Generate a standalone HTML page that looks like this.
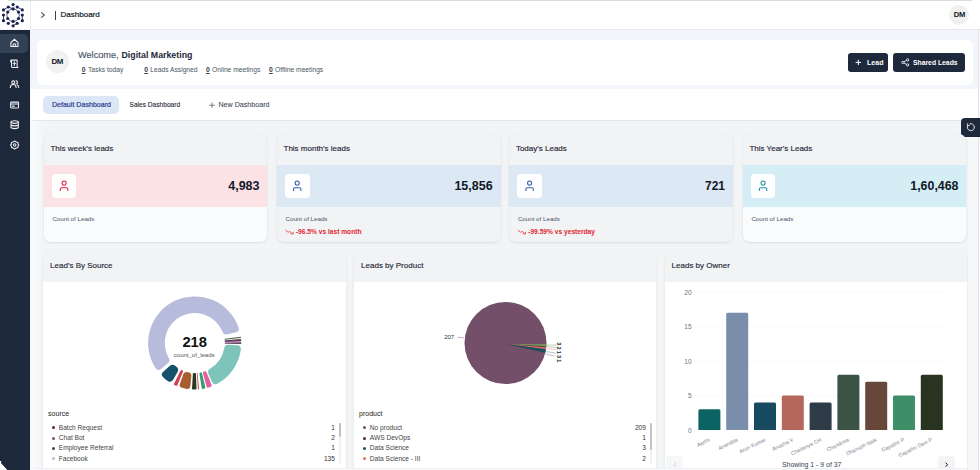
<!DOCTYPE html>
<html><head><meta charset="utf-8">
<style>
*{margin:0;padding:0;box-sizing:border-box}
html,body{width:980px;height:470px;overflow:hidden}
body{background:#f3f4f6;font-family:"Liberation Sans",sans-serif;position:relative}
.a{position:absolute}
.t{position:absolute;white-space:nowrap;line-height:1}
svg{position:absolute;left:0;top:0}
</style></head><body>
<div class="a" style="left:30.00px;top:121.00px;width:950.00px;height:349.00px;background:#f3f4f6;"></div>
<div class="a" style="left:0.00px;top:0.00px;width:980.00px;height:1.00px;background:#fff;"></div>
<div class="a" style="left:8.00px;top:0.00px;width:964.00px;height:1.00px;background:#d4dedc;"></div>
<div class="a" style="left:0.00px;top:1.00px;width:980.00px;height:28.00px;background:#fff;"></div>
<div class="a" style="left:30.00px;top:29.00px;width:950.00px;height:1.00px;background:#e4e7eb;"></div>
<div class="a" style="left:30.00px;top:1.00px;width:1.00px;height:29.00px;background:#e9ecef;"></div>
<div class="t" style="left:60.60px;top:11.00px;font-size:8.00px;color:#111827;-webkit-text-stroke:0.2px #111827;">Dashboard</div>
<div class="a" style="left:54.80px;top:11.00px;width:1.20px;height:8.60px;background:#374151;"></div>
<svg width="980" height="30"><path d="M41.6 12.6 L44.3 15 L41.6 17.4" fill="none" stroke="#4b5563" stroke-width="1.1" stroke-linecap="round" stroke-linejoin="round"/></svg>
<div class="a" style="left:949.00px;top:5.20px;width:19.80px;height:19.80px;background:#f0f0f1;border-radius:50%;"></div>
<div class="t" style="left:953.80px;top:11.00px;font-size:7.60px;color:#111827;font-weight:bold;letter-spacing:-0.4px;">DM</div>
<div class="a" style="left:0.00px;top:30.00px;width:30.00px;height:440.00px;background:#1e293b;"></div>
<div class="a" style="left:0.00px;top:34.00px;width:28.00px;height:18.70px;background:#334155;border-radius:0 5px 5px 0;"></div>
<svg width="30" height="470"><path d="M0 461 H1.1 V463.3 L7.3 470 H0 Z" fill="#fff"/></svg>
<div class="a" style="left:31.00px;top:30.00px;width:949.00px;height:59.00px;background:#f2f5f9;"></div>
<div class="a" style="left:36.60px;top:40.00px;width:936.40px;height:45.00px;background:#fff;border-radius:6px;"></div>
<div class="a" style="left:45.50px;top:49.90px;width:23.40px;height:23.40px;background:#f1f1f2;border-radius:50%;"></div>
<div class="t" style="left:51.50px;top:58.00px;font-size:7.90px;color:#111827;font-weight:bold;letter-spacing:-0.5px;">DM</div>
<div class="t" style="left:78.00px;top:51.00px;font-size:9.20px;color:#4a5568;-webkit-text-stroke:0.15px #4a5568;">Welcome,</div>
<div class="t" style="left:121.50px;top:51.00px;font-size:8.80px;color:#1e293b;font-weight:bold;">Digital Marketing</div>
<div class="t" style="left:81.70px;top:67.00px;font-size:6.80px;color:#374151;font-weight:bold;text-decoration:underline;">0</div>
<div class="t" style="left:88.00px;top:67.00px;font-size:6.70px;color:#4b5563;">Tasks today</div>
<div class="t" style="left:144.30px;top:67.00px;font-size:6.80px;color:#374151;font-weight:bold;text-decoration:underline;">0</div>
<div class="t" style="left:150.30px;top:67.00px;font-size:6.70px;color:#4b5563;">Leads Assigned</div>
<div class="t" style="left:206.00px;top:67.00px;font-size:6.80px;color:#374151;font-weight:bold;text-decoration:underline;">0</div>
<div class="t" style="left:212.00px;top:67.00px;font-size:6.70px;color:#4b5563;">Online meetings</div>
<div class="t" style="left:269.00px;top:67.00px;font-size:6.80px;color:#374151;font-weight:bold;text-decoration:underline;">0</div>
<div class="t" style="left:275.00px;top:67.00px;font-size:6.70px;color:#4b5563;">Offline meetings</div>
<div class="a" style="left:848.30px;top:53.30px;width:40.00px;height:18.30px;background:#1e293b;border-radius:3px;"></div>
<div class="a" style="left:892.90px;top:53.30px;width:72.10px;height:18.30px;background:#1e293b;border-radius:3px;"></div>
<div class="t" style="left:867.00px;top:59.00px;font-size:7.05px;color:#fff;font-weight:bold;">Lead</div>
<div class="t" style="left:913.00px;top:60.00px;font-size:6.80px;color:#fff;font-weight:bold;">Shared Leads</div>
<svg width="980" height="80"><path d="M858.3 59.7V65.1M855.6 62.4H861" stroke="#fff" stroke-width="1"/><g fill="none" stroke="#fff" stroke-width="0.85"><circle cx="902.8" cy="62.4" r="1.15"/><circle cx="907.6" cy="59.9" r="1.15"/><circle cx="907.6" cy="64.9" r="1.15"/><path d="M903.9 61.8L906.5 60.5M903.9 63L906.5 64.3"/></g></svg>
<div class="a" style="left:31.00px;top:89.00px;width:949.00px;height:32.00px;background:#fff;"></div>
<div class="a" style="left:31.00px;top:120.00px;width:949.00px;height:1.00px;background:#e5e7eb;"></div>
<div class="a" style="left:43.10px;top:96.20px;width:75.80px;height:17.60px;background:#dbe7f6;border-radius:5px;"></div>
<div class="t" style="left:51.90px;top:102.00px;font-size:7.10px;color:#2b3f8f;-webkit-text-stroke:0.2px #2b3f8f;">Default Dashboard</div>
<div class="t" style="left:129.50px;top:102.00px;font-size:6.60px;color:#1f2937;-webkit-text-stroke:0.1px #1f2937;">Sales Dashboard</div>
<div class="t" style="left:218.40px;top:102.00px;font-size:7.15px;color:#374151;-webkit-text-stroke:0.05px #374151;">New Dashboard</div>
<svg width="980" height="121"><path d="M212 102.6V107.9M209.3 105.25H214.7" stroke="#6b7280" stroke-width="0.9"/></svg>
<div class="a" style="left:967.50px;top:121.00px;width:10.50px;height:349.00px;background:#f6f7f9;"></div>
<div class="a" style="left:978.00px;top:30.00px;width:1.00px;height:440.00px;background:#e2e4e8;"></div>
<div class="a" style="left:979.00px;top:30.00px;width:1.00px;height:440.00px;background:#fbfbfc;"></div>
<div class="a" style="left:961.30px;top:117.90px;width:18.70px;height:18.70px;background:#1e293b;border-radius:4px 0 0 4px;"></div>
<svg width="980" height="140"><path d="M967.7 125.6 A3.5 3.5 0 1 0 969.6 123.9" fill="none" stroke="#e8eaee" stroke-width="1"/><path d="M967.3 123.4 L967.6 125.8 L969.9 125.2" fill="none" stroke="#e8eaee" stroke-width="0.9" stroke-linejoin="round"/></svg>
<div class="a" style="left:31px;top:121px;width:12px;height:349px;background:linear-gradient(90deg,#fafbfc,#f3f4f6)"></div>
<div class="a" style="left:43.80px;top:133.9px;width:223.7px;height:108px;border-radius:7px;overflow:hidden;background:#f2f3f5;box-shadow:0 1px 2.5px rgba(0,0,0,.09),0 0 1px rgba(0,0,0,.05)">
<div class="a" style="left:0;top:31.4px;width:224px;height:41.4px;background:#fde2e5"></div>
<div class="a" style="left:0;top:72.8px;width:224px;height:36px;background:#f9fbfd"></div>
<div class="a" style="left:8.1px;top:40px;width:24.6px;height:24.5px;background:#fff;border-radius:4px"></div>
</div>
<div class="t" style="left:50.40px;top:145.00px;font-size:8.00px;color:#1f2937;-webkit-text-stroke:0.15px #1f2937;">This week's leads</div>
<div class="t" style="right:720.50px;top:180.00px;font-size:12.50px;color:#111827;font-weight:bold;">4,983</div>
<div class="t" style="left:52.40px;top:216.00px;font-size:6.20px;color:#4a5568;">Count of Leads</div>
<svg width="980" height="240"><g fill="none" stroke="#e11d48" stroke-width="1.05"><circle cx="64.10" cy="183.1" r="2.05"/><path d="M60.40 190.9 V189.1 Q60.40 187.7 61.80 187.7 H66.40 Q67.80 187.7 67.80 189.1 V190.9"/></g></svg>
<div class="a" style="left:276.90px;top:133.9px;width:223.7px;height:108px;border-radius:7px;overflow:hidden;background:#f2f3f5;box-shadow:0 1px 2.5px rgba(0,0,0,.09),0 0 1px rgba(0,0,0,.05)">
<div class="a" style="left:0;top:31.4px;width:224px;height:41.4px;background:#dce9f5"></div>
<div class="a" style="left:0;top:72.8px;width:224px;height:36px;background:#f2f3f5"></div>
<div class="a" style="left:8.1px;top:40px;width:24.6px;height:24.5px;background:#fff;border-radius:4px"></div>
</div>
<div class="t" style="left:283.50px;top:145.00px;font-size:8.00px;color:#1f2937;-webkit-text-stroke:0.15px #1f2937;">This month's leads</div>
<div class="t" style="right:487.40px;top:180.00px;font-size:12.50px;color:#111827;font-weight:bold;">15,856</div>
<div class="t" style="left:285.50px;top:216.00px;font-size:6.20px;color:#4a5568;">Count of Leads</div>
<div class="t" style="left:295.80px;top:229.00px;font-size:6.65px;color:#e5262f;font-weight:bold;">-96.5% vs last month</div>
<svg width="980" height="240"><path d="M285.5 230.2 L288.2 232.3 L289.7 231.4 L292.4 233.8" fill="none" stroke="#ef4444" stroke-width="0.9"/><path d="M290.5 233.9 L293.1 233.9 L293.1 231.9" fill="none" stroke="#ef4444" stroke-width="0.9"/></svg>
<svg width="980" height="240"><g fill="none" stroke="#3559a8" stroke-width="1.05"><circle cx="297.20" cy="183.1" r="2.05"/><path d="M293.50 190.9 V189.1 Q293.50 187.7 294.90 187.7 H299.50 Q300.90 187.7 300.90 189.1 V190.9"/></g></svg>
<div class="a" style="left:509.30px;top:133.9px;width:223.7px;height:108px;border-radius:7px;overflow:hidden;background:#f2f3f5;box-shadow:0 1px 2.5px rgba(0,0,0,.09),0 0 1px rgba(0,0,0,.05)">
<div class="a" style="left:0;top:31.4px;width:224px;height:41.4px;background:#dce9f5"></div>
<div class="a" style="left:0;top:72.8px;width:224px;height:36px;background:#f2f3f5"></div>
<div class="a" style="left:8.1px;top:40px;width:24.6px;height:24.5px;background:#fff;border-radius:4px"></div>
</div>
<div class="t" style="left:515.90px;top:145.00px;font-size:8.00px;color:#1f2937;-webkit-text-stroke:0.15px #1f2937;">Today's Leads</div>
<div class="t" style="right:255.00px;top:180.00px;font-size:12.00px;color:#111827;font-weight:bold;">721</div>
<div class="t" style="left:517.90px;top:216.00px;font-size:6.20px;color:#4a5568;">Count of Leads</div>
<div class="t" style="left:528.20px;top:229.00px;font-size:6.65px;color:#e5262f;font-weight:bold;">-99.59% vs yesterday</div>
<svg width="980" height="240"><path d="M517.9 230.2 L520.6 232.3 L522.1 231.4 L524.8 233.8" fill="none" stroke="#ef4444" stroke-width="0.9"/><path d="M522.9 233.9 L525.5 233.9 L525.5 231.9" fill="none" stroke="#ef4444" stroke-width="0.9"/></svg>
<svg width="980" height="240"><g fill="none" stroke="#3559a8" stroke-width="1.05"><circle cx="529.60" cy="183.1" r="2.05"/><path d="M525.90 190.9 V189.1 Q525.90 187.7 527.30 187.7 H531.90 Q533.30 187.7 533.30 189.1 V190.9"/></g></svg>
<div class="a" style="left:742.80px;top:133.9px;width:223.7px;height:108px;border-radius:7px;overflow:hidden;background:#f2f3f5;box-shadow:0 1px 2.5px rgba(0,0,0,.09),0 0 1px rgba(0,0,0,.05)">
<div class="a" style="left:0;top:31.4px;width:224px;height:41.4px;background:#d5eef5"></div>
<div class="a" style="left:0;top:72.8px;width:224px;height:36px;background:#f9fbfd"></div>
<div class="a" style="left:8.1px;top:40px;width:24.6px;height:24.5px;background:#fff;border-radius:4px"></div>
</div>
<div class="t" style="left:749.40px;top:145.00px;font-size:8.00px;color:#1f2937;-webkit-text-stroke:0.15px #1f2937;">This Year's Leads</div>
<div class="t" style="right:21.50px;top:180.00px;font-size:12.40px;color:#111827;font-weight:bold;">1,60,468</div>
<div class="t" style="left:751.40px;top:216.00px;font-size:6.20px;color:#4a5568;">Count of Leads</div>
<svg width="980" height="240"><g fill="none" stroke="#1f8fa8" stroke-width="1.05"><circle cx="763.10" cy="183.1" r="2.05"/><path d="M759.40 190.9 V189.1 Q759.40 187.7 760.80 187.7 H765.40 Q766.80 187.7 766.80 189.1 V190.9"/></g></svg>
<div class="a" style="left:43.20px;top:250px;width:302.90px;height:226px;border-radius:7px;overflow:hidden;background:#fff;box-shadow:0 1px 2.5px rgba(0,0,0,.08),0 0 1px rgba(0,0,0,.05)">
<div class="a" style="left:0;top:0;width:100%;height:31.5px;background:#f2f3f5"></div></div>
<div class="t" style="left:50.10px;top:262.00px;font-size:8.00px;color:#1f2937;-webkit-text-stroke:0.15px #1f2937;">Lead's By Source</div>
<div class="a" style="left:354.20px;top:250px;width:301.90px;height:226px;border-radius:7px;overflow:hidden;background:#fff;box-shadow:0 1px 2.5px rgba(0,0,0,.08),0 0 1px rgba(0,0,0,.05)">
<div class="a" style="left:0;top:0;width:100%;height:31.5px;background:#f2f3f5"></div></div>
<div class="t" style="left:361.10px;top:262.00px;font-size:8.00px;color:#1f2937;-webkit-text-stroke:0.15px #1f2937;">Leads by Product</div>
<div class="a" style="left:664.70px;top:250px;width:302.00px;height:226px;border-radius:7px;overflow:hidden;background:#fff;box-shadow:0 1px 2.5px rgba(0,0,0,.08),0 0 1px rgba(0,0,0,.05)">
<div class="a" style="left:0;top:0;width:100%;height:31.5px;background:#f2f3f5"></div></div>
<div class="t" style="left:671.60px;top:262.00px;font-size:8.00px;color:#1f2937;-webkit-text-stroke:0.15px #1f2937;">Leads by Owner</div>
<svg width="980" height="470" font-family="Liberation Sans, sans-serif">
<g transform="translate(194.7 343)"><path d="M-39.26 25.10A46.60 46.60 0 1 1 43.95 -15.49Q45.12 -11.66 41.24 -10.66L32.88 -8.66Q29.01 -7.65 27.74 -11.43A30.00 30.00 0 1 0 -26.09 14.82Q-23.88 18.15 -27.07 20.57L-33.79 25.94Q-36.97 28.37 -39.26 25.10Z" fill="#b8bcdc"/>
<path d="M46.22 -5.93A46.60 46.60 0 0 1 46.29 -5.35Q46.34 -4.95 45.94 -4.91L30.23 -3.23Q29.83 -3.19 29.78 -3.59A30.00 30.00 0 0 0 29.77 -3.67Q29.72 -4.07 30.12 -4.13L45.77 -6.27Q46.17 -6.32 46.22 -5.93Z" fill="#55714f"/>
<path d="M46.48 -3.36A46.60 46.60 0 0 1 46.54 -2.33Q46.57 -1.63 45.87 -1.60L30.69 -1.07Q29.98 -1.05 29.95 -1.75A30.00 30.00 0 0 0 29.94 -1.91Q29.89 -2.61 30.59 -2.68L45.72 -4.00Q46.42 -4.06 46.48 -3.36Z" fill="#6b3f63"/>
<path d="M46.60 -0.18A46.60 46.60 0 0 1 46.60 0.50Q46.59 0.98 46.12 0.97L30.46 0.64Q29.99 0.63 30.00 0.16A30.00 30.00 0 0 0 30.00 0.05Q30.00 -0.42 30.47 -0.43L46.12 -0.64Q46.60 -0.65 46.60 -0.18Z" fill="#6b3f63"/>
<path d="M46.16 6.42A46.60 46.60 0 0 1 22.53 40.79Q18.95 42.57 17.33 38.92L13.83 31.06Q12.20 27.41 15.74 25.54A30.00 30.00 0 0 0 29.48 5.54Q29.96 1.57 33.95 1.78L42.54 2.23Q46.54 2.44 46.16 6.42Z" fill="#7ec4ba"/>
<path d="M16.06 43.75A46.60 46.60 0 0 1 13.66 44.55Q12.22 44.97 11.82 43.52L8.26 30.40Q7.87 28.95 9.30 28.52A30.00 30.00 0 0 0 9.83 28.34Q11.24 27.82 11.80 29.21L16.89 41.82Q17.46 43.21 16.06 43.75Z" fill="#df62a0"/>
<path d="M9.90 45.54A46.60 46.60 0 0 1 8.12 45.89Q7.13 46.05 6.98 45.06L4.74 30.64Q4.59 29.65 5.58 29.48A30.00 30.00 0 0 0 6.03 29.39Q7.00 29.17 7.24 30.14L10.65 44.34Q10.88 45.31 9.90 45.54Z" fill="#3a9a6e"/>
<path d="M4.06 46.42A46.60 46.60 0 0 1 3.58 46.46Q3.25 46.49 3.23 46.16L2.12 30.26Q2.09 29.93 2.42 29.90A30.00 30.00 0 0 0 2.49 29.90Q2.82 29.87 2.85 30.20L4.35 46.06Q4.39 46.39 4.06 46.42Z" fill="#c94a55"/>
<path d="M0.87 46.59A46.60 46.60 0 0 1 -1.76 46.57Q-2.76 46.52 -2.70 45.52L-1.84 30.95Q-1.78 29.95 -0.78 29.99A30.00 30.00 0 0 0 0.20 30.00Q1.20 29.98 1.24 30.98L1.83 45.56Q1.87 46.56 0.87 46.59Z" fill="#26391f"/>
<path d="M-8.02 45.90A46.60 46.60 0 0 1 -12.76 44.82Q-15.94 43.79 -14.79 40.65L-11.40 31.33Q-10.26 28.19 -7.06 29.16A30.00 30.00 0 0 0 -6.33 29.32Q-3.03 29.85 -3.37 33.18L-4.37 43.03Q-4.71 46.36 -8.02 45.90Z" fill="#a75f2f"/>
<path d="M-18.60 42.73A46.60 46.60 0 0 1 -20.26 41.97Q-21.16 41.52 -20.70 40.63L-14.07 27.62Q-13.62 26.73 -12.72 27.17A30.00 30.00 0 0 0 -12.30 27.36Q-11.38 27.76 -11.76 28.68L-17.30 42.19Q-17.68 43.11 -18.60 42.73Z" fill="#cf4350"/>
<path d="M-27.01 37.98A46.60 46.60 0 0 1 -31.53 34.31Q-34.36 31.48 -31.41 28.78L-25.07 22.97Q-22.12 20.27 -19.23 23.03A30.00 30.00 0 0 0 -18.53 23.60Q-15.23 25.85 -17.26 29.30L-21.62 36.71Q-23.65 40.15 -27.01 37.98Z" fill="#17506a"/>
</g>
</svg>
<div class="t" style="left:182.40px;top:335.00px;font-size:14.80px;color:#111;font-weight:bold;">218</div>
<div class="t" style="left:173.80px;top:352.00px;font-size:6.00px;color:#555;">count_of_leads</div>
<svg width="980" height="470" font-family="Liberation Sans, sans-serif">
  <circle cx="505.5" cy="343" r="41" fill="#744f6a"/>
  <path d="M507 344.2 L546.6 344.3 L546.4 346.2 Z" fill="#7d9d5a"/>
  <path d="M507 344.2 L546.4 346.2 L546.3 346.9 Z" fill="#3b4f3a"/>
  <path d="M507 344.2 L546.2 347.6 L545.9 349.3 Z" fill="#e07060"/>
  <path d="M507 344.2 L545.9 349.3 L545.1 352.8 Z" fill="#1b4e5f"/>
  <path d="M546.5 345 L556.8 345" stroke="#a9c48a" stroke-width="0.7"/>
  <path d="M546.3 346.6 L556.3 347.4" stroke="#9aa79a" stroke-width="0.6"/>
  <path d="M546 348.5 L556 349.6" stroke="#eaa898" stroke-width="0.6"/>
  <path d="M545.5 351.5 L555.5 353" stroke="#6aa3b0" stroke-width="0.6"/>
  <path d="M545 353.8 L554.5 356.2" stroke="#b39aae" stroke-width="0.7"/>
  <text transform="translate(556.6 342.2) rotate(90)" font-size="5.6" font-weight="bold" fill="#222" letter-spacing="-0.2">3 2 1 3 1</text>
  <path d="M457.5 337.2 L464 337.9" stroke="#b08aa8" stroke-width="0.7"/>
  <text x="444.2" y="339.2" font-size="6" fill="#333">207</text>
  <g stroke="#e6e8ec" stroke-width="0.7" stroke-dasharray="1.2 2.6">
    <line x1="695.5" y1="292.5" x2="946" y2="292.5"/>
    <line x1="695.5" y1="327" x2="946" y2="327"/>
    <line x1="695.5" y1="361.5" x2="946" y2="361.5"/>
    <line x1="695.5" y1="396" x2="946" y2="396"/>
  </g>
  <g font-size="6.5" fill="#6b7280" text-anchor="end">
    <text x="691.5" y="294.5">20</text>
    <text x="691.5" y="329">15</text>
    <text x="691.5" y="363.5">10</text>
    <text x="691.5" y="398">5</text>
    <text x="691.5" y="432.5">0</text>
  </g>
<path d="M698.4 430.0V410.8Q698.4 409.3 699.9 409.3H718.9Q720.4 409.3 720.4 410.8V430.0Z" fill="#0b6463"/>
<path d="M726.2 430.0V314.2Q726.2 312.7 727.7 312.7H746.7Q748.2 312.7 748.2 314.2V430.0Z" fill="#7a8dab"/>
<path d="M754.0 430.0V403.9Q754.0 402.4 755.5 402.4H774.5Q776.0 402.4 776.0 403.9V430.0Z" fill="#184a60"/>
<path d="M781.8 430.0V397.0Q781.8 395.5 783.3 395.5H802.3Q803.8 395.5 803.8 397.0V430.0Z" fill="#b5675c"/>
<path d="M809.6 430.0V403.9Q809.6 402.4 811.1 402.4H830.1Q831.6 402.4 831.6 403.9V430.0Z" fill="#2d3c47"/>
<path d="M837.4 430.0V376.3Q837.4 374.8 838.9 374.8H857.9Q859.4 374.8 859.4 376.3V430.0Z" fill="#3a5344"/>
<path d="M865.2 430.0V383.2Q865.2 381.7 866.7 381.7H885.7Q887.2 381.7 887.2 383.2V430.0Z" fill="#67473a"/>
<path d="M893.0 430.0V397.0Q893.0 395.5 894.5 395.5H913.5Q915.0 395.5 915.0 397.0V430.0Z" fill="#3e8f68"/>
<path d="M920.8 430.0V376.3Q920.8 374.8 922.3 374.8H941.3Q942.8 374.8 942.8 376.3V430.0Z" fill="#28341f"/>
<text x="710.4" y="441" transform="rotate(-26 710.4 441)" text-anchor="end" font-size="5.3" fill="#7b818b">Aarthi</text>
<text x="738.2" y="441" transform="rotate(-26 738.2 441)" text-anchor="end" font-size="5.3" fill="#7b818b">Anandita</text>
<text x="766.0" y="441" transform="rotate(-26 766.0 441)" text-anchor="end" font-size="5.3" fill="#7b818b">Arun Kumar</text>
<text x="793.8" y="441" transform="rotate(-26 793.8 441)" text-anchor="end" font-size="5.3" fill="#7b818b">Anusha V</text>
<text x="821.6" y="441" transform="rotate(-26 821.6 441)" text-anchor="end" font-size="5.3" fill="#7b818b">Chaitanya CH</text>
<text x="849.4" y="441" transform="rotate(-26 849.4 441)" text-anchor="end" font-size="5.3" fill="#7b818b">Chandima</text>
<text x="877.2" y="441" transform="rotate(-26 877.2 441)" text-anchor="end" font-size="5.3" fill="#7b818b">Dhanush Naik</text>
<text x="905.0" y="441" transform="rotate(-26 905.0 441)" text-anchor="end" font-size="5.3" fill="#7b818b">Gayathri P</text>
<text x="932.8" y="441" transform="rotate(-26 932.8 441)" text-anchor="end" font-size="5.3" fill="#7b818b">Gayathri Devi P</text>
</svg>
<div class="t" style="left:48.10px;top:410.00px;font-size:7.00px;color:#222;">source</div>
<div class="a" style="left:51.90px;top:426.30px;width:3.00px;height:3.00px;background:#4d2a44;border-radius:50%;"></div>
<div class="t" style="left:58.80px;top:425.00px;font-size:6.60px;color:#3f3f46;">Batch Request</div>
<div class="t" style="right:645.10px;top:425.00px;font-size:6.60px;color:#333;">1</div>
<div class="a" style="left:51.90px;top:436.55px;width:3.00px;height:3.00px;background:#7a4d6f;border-radius:50%;"></div>
<div class="t" style="left:58.80px;top:435.00px;font-size:6.60px;color:#3f3f46;">Chat Bot</div>
<div class="t" style="right:645.10px;top:435.00px;font-size:6.60px;color:#333;">2</div>
<div class="a" style="left:51.90px;top:446.80px;width:3.00px;height:3.00px;background:#2e4d35;border-radius:50%;"></div>
<div class="t" style="left:58.80px;top:445.00px;font-size:6.60px;color:#3f3f46;">Employee Referral</div>
<div class="t" style="right:645.10px;top:445.00px;font-size:6.60px;color:#333;">1</div>
<div class="a" style="left:51.90px;top:457.05px;width:3.00px;height:3.00px;background:#b8bcdc;border-radius:50%;"></div>
<div class="t" style="left:58.80px;top:456.00px;font-size:6.60px;color:#3f3f46;">Facebook</div>
<div class="t" style="right:645.10px;top:456.00px;font-size:6.60px;color:#333;">135</div>
<div class="a" style="left:339.40px;top:423.00px;width:1.90px;height:41.00px;background:#f1f1f1;border-radius:1px;"></div>
<div class="a" style="left:339.40px;top:423.00px;width:1.90px;height:13.50px;background:#c1c1c1;border-radius:1px;"></div>
<div class="t" style="left:359.10px;top:410.00px;font-size:7.00px;color:#222;">product</div>
<div class="a" style="left:362.90px;top:426.30px;width:3.00px;height:3.00px;background:#744f6a;border-radius:50%;"></div>
<div class="t" style="left:369.80px;top:425.00px;font-size:6.60px;color:#3f3f46;">No product</div>
<div class="t" style="right:334.10px;top:425.00px;font-size:6.60px;color:#333;">209</div>
<div class="a" style="left:362.90px;top:436.55px;width:3.00px;height:3.00px;background:#4d2a44;border-radius:50%;"></div>
<div class="t" style="left:369.80px;top:435.00px;font-size:6.60px;color:#3f3f46;">AWS DevOps</div>
<div class="t" style="right:334.10px;top:435.00px;font-size:6.60px;color:#333;">1</div>
<div class="a" style="left:362.90px;top:446.80px;width:3.00px;height:3.00px;background:#1b4e5f;border-radius:50%;"></div>
<div class="t" style="left:369.80px;top:445.00px;font-size:6.60px;color:#3f3f46;">Data Science</div>
<div class="t" style="right:334.10px;top:445.00px;font-size:6.60px;color:#333;">3</div>
<div class="a" style="left:362.90px;top:457.05px;width:3.00px;height:3.00px;background:#e07060;border-radius:50%;"></div>
<div class="t" style="left:369.80px;top:456.00px;font-size:6.60px;color:#3f3f46;">Data Science - III</div>
<div class="t" style="right:334.10px;top:456.00px;font-size:6.60px;color:#333;">2</div>
<div class="a" style="left:650.40px;top:423.00px;width:1.90px;height:41.00px;background:#f1f1f1;border-radius:1px;"></div>
<div class="a" style="left:650.40px;top:423.00px;width:1.90px;height:26.80px;background:#c1c1c1;border-radius:1px;"></div>
<div class="a" style="left:666.00px;top:456.30px;width:17.00px;height:16.00px;background:#f6f7f9;border-radius:4px;"></div>
<div class="a" style="left:938.20px;top:456.00px;width:17.30px;height:16.00px;background:#f3f4f6;border-radius:4px;"></div>
<div class="a" style="left:31.00px;top:468.00px;width:936.00px;height:1.00px;background:#eff1f3;"></div>
<div class="a" style="left:31.00px;top:469.00px;width:936.00px;height:1.00px;background:#f8f9fa;"></div>
<svg width="980" height="470"><path d="M675.8 462.5 L673.8 464.5 L675.8 466.5" fill="none" stroke="#c7cbd1" stroke-width="0.9"/><path d="M945.6 462.7 L947.6 464.7 L945.6 466.7" fill="none" stroke="#111" stroke-width="1"/></svg>
<div class="t" style="left:782.00px;top:462.00px;font-size:6.90px;color:#374151;">Showing 1 - 9 of 37</div>
<svg width="30" height="160">
<g stroke="#1b2456" stroke-width="0.9">
<line x1="3.5" y1="9.9" x2="8.3" y2="7.0"/>
<line x1="17.2" y1="7" x2="22.3" y2="9.9"/>
<line x1="3.5" y1="15" x2="3.5" y2="20.7"/>
<line x1="22.3" y1="15" x2="22.3" y2="20.7"/>
<line x1="13.1" y1="25.8" x2="17.2" y2="23.3"/>
<line x1="8.3" y1="7" x2="13.1" y2="8.9"/>
<circle cx="13.1" cy="15.2" r="6.2" fill="none" stroke-width="0.75"/>
</g><g fill="#1b2456">
<circle cx="13.1" cy="4.6" r="1.6"/>
<circle cx="8.3" cy="7.0" r="1.6"/>
<circle cx="17.2" cy="7.0" r="1.6"/>
<circle cx="3.5" cy="9.9" r="1.6"/>
<circle cx="22.3" cy="9.9" r="1.6"/>
<circle cx="3.5" cy="15" r="1.6"/>
<circle cx="22.3" cy="15" r="1.6"/>
<circle cx="3.5" cy="20.7" r="1.6"/>
<circle cx="22.3" cy="20.7" r="1.6"/>
<circle cx="8.3" cy="23.3" r="1.6"/>
<circle cx="17.2" cy="23.3" r="1.6"/>
<circle cx="13.1" cy="25.8" r="1.6"/>
<circle cx="13.1" cy="8.9" r="1.6"/>
<circle cx="18.5" cy="12.1" r="1.6"/>
<circle cx="18.5" cy="18.5" r="1.6"/>
<circle cx="13.1" cy="21.4" r="1.6"/>
<circle cx="7.7" cy="18.5" r="1.6"/>
<circle cx="7.7" cy="12.1" r="1.6"/>
</g>
<g fill="none" stroke="#eef0f3" stroke-width="1.25" stroke-linejoin="round" stroke-linecap="round">
<g transform="translate(14.5 42.9) scale(0.85) translate(-14.5 -42.9)"><path d="M10.2 42.6 L14.4 38.6 L18.6 42.6 V47.2 H10.2 Z M12.9 47.2 V44.2 H15.9 V47.2"/></g>
<g transform="translate(14.5 63.7) scale(0.85) translate(-14.5 -63.7)"><path d="M11 59.5 H17.6 V67 Q17.6 68.2 18.6 68.2 H12.2 Q11 68.2 11 67 Z M11 59.5 Q10 59.5 10 60.6 V61.5 H11 M14.3 61.5 V66 M12.9 63.2 H15.7"/></g>
<g transform="translate(14.5 84.1) scale(0.85) translate(-14.5 -84.1)"><circle cx="13" cy="82" r="1.7"/><path d="M9.6 88 Q9.6 84.6 13 84.6 Q16.4 84.6 16.4 88"/><path d="M16.3 80.3 A1.7 1.7 0 0 1 16.3 83.7 M17.6 84.9 Q19.4 85.6 19.4 88"/></g>
<g transform="translate(14.6 105.1) scale(0.85) translate(-14.6 -105.1)"><rect x="10" y="101.6" width="9.2" height="7" rx="1"/><path d="M10 103.8 H19.2 M11.8 106.3 H14.2"/></g>
<g transform="translate(14.7 125) scale(0.85) translate(-14.7 -125)"><ellipse cx="14.7" cy="121.6" rx="4.3" ry="1.5"/><path d="M10.4 121.6 V128.3 Q14.7 130.3 19 128.3 V121.6 M10.4 125 Q14.7 127 19 125"/></g>
<g transform="translate(14.7 145) scale(0.85) translate(-14.7 -145)"><circle cx="14.7" cy="145" r="1.5"/><path d="M14.7 140.4 L16.7 141.5 L18.6 142 L18.6 144.1 L19.5 145 L18.6 145.9 L18.6 148 L16.7 148.5 L14.7 149.6 L12.7 148.5 L10.8 148 L10.8 145.9 L9.9 145 L10.8 144.1 L10.8 142 L12.7 141.5 Z"/></g>
</g></svg>
</body></html>
